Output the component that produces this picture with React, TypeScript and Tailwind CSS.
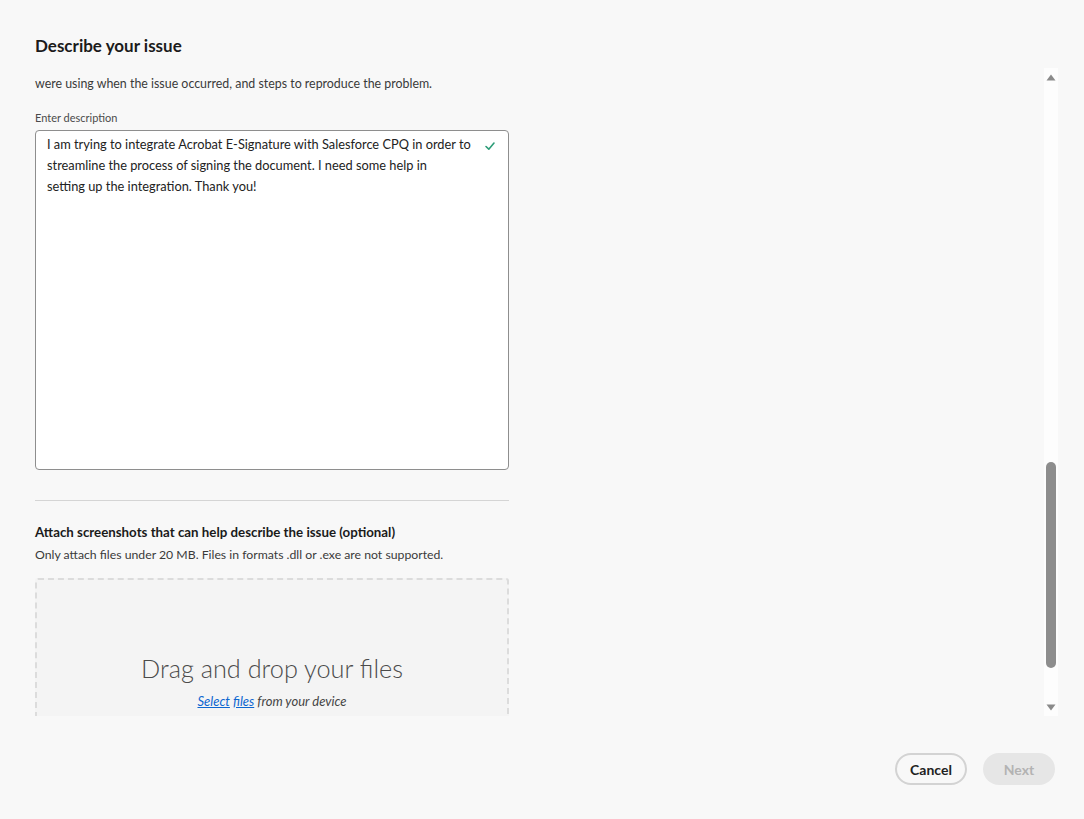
import React from "react";

const font = { fontFamily: "Lato, 'Open Sans', sans-serif" };

export default function App() {
  return (
    <div
      className="w-full h-[819px] bg-[#f8f8f8] flex flex-col text-[#222222] overflow-hidden"
      style={font}
    >
      <div className="pt-[35px] px-[35px] h-[68px] shrink-0">
        <h1 className="text-[17px] font-bold leading-[22px] text-[#1b1b1b]">Describe your issue</h1>
      </div>
      <div className="flex h-[648px] shrink-0">
        <div className="flex-1 overflow-hidden pl-[35px]">
          <div className="w-[474px] pt-[6px]">
            <p className="text-[12.4px] leading-[20px] text-[#3a3a3a]">
              were using when the issue occurred, and steps to reproduce the problem.
            </p>
            <div className="mt-[16px] mb-[4px] text-[11px] leading-[16px] text-[#4b4b4b]">Enter description</div>
            <div className="relative h-[340px] bg-white border border-[#8e8e8e] rounded-[4px] pl-[11px] pt-[3px] text-[12.8px] leading-[21px] text-[#222222]">
              <div>I am trying to integrate Acrobat E-Signature with Salesforce CPQ in order to</div>
              <div>streamline the process of signing the document. I need some help in</div>
              <div>setting up the integration. Thank you!</div>
              <svg
                className="absolute right-[12px] top-[9px]"
                width="12"
                height="12"
                viewBox="0 0 12 12"
                fill="none"
              >
                <path d="M2 6.5 L4.8 9.2 L10 3" stroke="#2d9d78" strokeWidth="1.6" strokeLinecap="round" strokeLinejoin="round" />
              </svg>
            </div>
            <div className="mt-[30px] h-px bg-[#d5d5d5]" />
            <div className="mt-[21px] text-[13.3px] leading-[20px] font-bold text-[#1b1b1b]">
              Attach screenshots that can help describe the issue (optional)
            </div>
            <div className="mt-[3px] text-[12.25px] leading-[20px] text-[#3a3a3a]">
              Only attach files under 20 MB. Files in formats .dll or .exe are not supported.
            </div>
            <div className="mt-[13px] h-[220px] border-2 border-dashed border-[#dcdcdc] rounded-[3px] bg-[#f4f4f4] flex flex-col items-center pt-[71px]">
              <div className="text-[25.3px] leading-[34px] font-light text-[#4b4b4b]">Drag and drop your files</div>
              <div className="mt-[7px] text-[13px] leading-[18px] italic text-[#444444]">
                <span className="text-[#0d66d0] underline">Select</span>{" "}
                <span className="text-[#0d66d0] underline">files</span> from your device
              </div>
            </div>
          </div>
        </div>
        <div className="w-[14px] mr-[26px] bg-[#fdfdfd] flex flex-col items-center">
          <svg className="mt-[6px]" width="10" height="7" viewBox="0 0 10 7">
            <path d="M5 0.5 L9.5 6.5 L0.5 6.5 Z" fill="#8a8a8a" />
          </svg>
          <div className="flex-1 w-full flex flex-col items-center">
            <div className="mt-[381px] w-[10px] h-[206px] rounded-full bg-[#8d8d8d]" />
          </div>
          <svg className="mb-[5px]" width="10" height="7" viewBox="0 0 10 7">
            <path d="M5 6.5 L9.5 0.5 L0.5 0.5 Z" fill="#8a8a8a" />
          </svg>
        </div>
      </div>
      <div className="flex-1 flex justify-end items-start pt-[37px] pr-[29px] gap-[16px]">
        <button className="h-[32px] w-[72px] rounded-full border-2 border-[#d3d3d3] bg-[#f8f8f8] text-[14px] font-bold text-[#222222]">
          Cancel
        </button>
        <button className="h-[32px] w-[72px] rounded-full bg-[#e6e6e6] text-[14px] font-bold text-[#b3b3b3]">
          Next
        </button>
      </div>
    </div>
  );
}
